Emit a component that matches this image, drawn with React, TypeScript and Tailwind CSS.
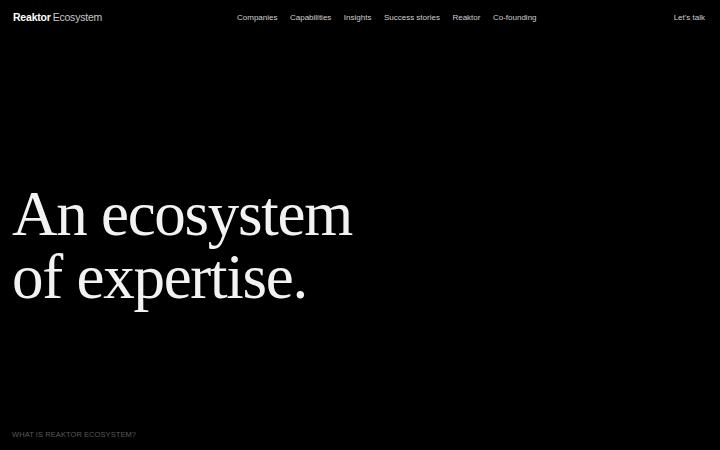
import React from "react";

export default function App() {
  const nav = ["Companies", "Capabilities", "Insights", "Success stories", "Reaktor", "Co-founding"];
  return (
    <div className="w-[720px] h-[450px] bg-black flex flex-col overflow-hidden" style={{ fontFamily: '"Liberation Sans", Arial, sans-serif' }}>
      <header className="h-[36px] flex items-center pl-[13px] pr-[15px]">
        <div className="w-[224px] flex items-baseline text-[10.5px] tracking-[-0.02em]">
          <span className="font-bold text-white">Reaktor</span>
          <span className="ml-[2px] text-[#c8c8c8]">Ecosystem</span>
        </div>
        <nav className="flex gap-[12.5px] text-[8px] text-[#d0d0d0]">
          {nav.map((n) => (
            <span key={n}>{n}</span>
          ))}
        </nav>
        <span className="ml-auto text-[8px] text-[#d0d0d0]">Let's talk</span>
      </header>
      <main className="flex-1 flex flex-col pl-[12px]">
        <h1
          className="mt-[147px] text-[63px] text-[#f2f2f2] tracking-[-0.02em]"
          style={{ fontFamily: '"Liberation Serif", "Times New Roman", serif', fontWeight: 400 }}
        >
          <span className="block leading-[63px]">An ecosystem</span>
          <span className="block leading-[63px]">of expertise.</span>
        </h1>
        <div className="mt-auto mb-[10px] text-[7.5px] text-[#5a5a5a] tracking-[0.01em]">WHAT IS REAKTOR ECOSYSTEM?</div>
      </main>
    </div>
  );
}
